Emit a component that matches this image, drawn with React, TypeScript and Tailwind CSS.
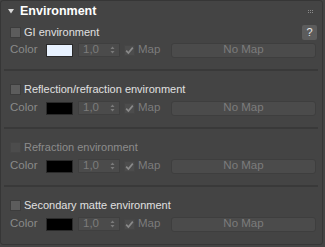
import React from 'react'

const font = { fontFamily: '"Liberation Sans", Arial, sans-serif' }

function Check({ checked, dim }: { checked?: boolean; dim?: boolean }) {
    return (
        <div
            className={`flex items-center justify-center w-[11px] h-[11px] border ${
                dim ? 'bg-[#4c4c4c] border-[#464646]' : 'bg-[#5c5c5c] border-[#3c3c3c]'
            }`}
        >
            {checked && (
                <svg width="9" height="9" viewBox="0 0 9 9">
                    <path d="M1.2 4.6 L3.4 7 L7.8 1.6" fill="none" stroke="#8a8a8a" strokeWidth="1.7" />
                </svg>
            )}
        </div>
    )
}

function ControlRow({ swatch }: { swatch: string }) {
    return (
        <div className="flex items-center h-[14px] pl-[9px] pr-[6px] text-[11.5px]">
            <div className="w-[36px] text-[#8a8a8a] leading-none">Color</div>
            <div className={`w-[27px] h-[13px] border border-[#2a2a2a] ${swatch}`} />
            <div className="flex items-center justify-between ml-[5px] w-[42px] h-[14px] pl-[4px] pr-[4px] bg-[#4b4b4b] border border-[#3f3f3f] text-[#7c7c7c]">
                <span className="leading-none">1,0</span>
                <svg width="5" height="8" viewBox="0 0 5 8">
                    <path d="M0.5 3 L2.5 0.5 L4.5 3 Z M0.5 5 L2.5 7.5 L4.5 5 Z" fill="#7a7a7a" />
                </svg>
            </div>
            <div className="ml-[4px]">
                <Check checked dim />
            </div>
            <div className="ml-[3px] text-[#7c7c7c] leading-none">Map</div>
            <div className="ml-auto flex items-center justify-center w-[145px] h-[15px] rounded-[3px] bg-[#4b4b4b] border border-[#3e3e3e] text-[#7c7c7c] leading-none">
                No Map
            </div>
        </div>
    )
}

function Section({ label, swatch, disabled }: { label: string; swatch: string; disabled?: boolean }) {
    return (
        <div>
            <div className="h-[2px] ml-[3px] mr-[4px] bg-[#393939]" />
            <div className="flex items-center h-[16px] mt-[10px] pl-[9px]">
                <Check dim={disabled} />
                <span className={`ml-[3px] text-[11px] leading-none ${disabled ? 'text-[#8c8c8c]' : 'text-[#e0e0e0]'}`}>
                    {label}
                </span>
            </div>
            <div className="mt-[4px] mb-[12px]">
                <ControlRow swatch={swatch} />
            </div>
        </div>
    )
}

export default function App() {
    return (
        <div className="w-[325px] h-[247px] bg-[#444444] overflow-hidden" style={font}>
            <div className="w-[323px] h-[245px] rounded-[3px] border border-[#363636] bg-[#444444]">
                <div className="flex items-center h-[20px] pl-[7px] pr-[9px]">
                    <svg width="6" height="5" viewBox="0 0 6 5">
                        <path d="M0 0 L6 0 L3 4.5 Z" fill="#d8d8d8" />
                    </svg>
                    <span className="ml-[6px] text-[12.5px] font-bold text-white leading-none">Environment</span>
                    <div className="ml-auto grid grid-cols-3 gap-[1px]">
                        {[0, 1, 2, 3, 4, 5].map((i) => (
                            <div key={i} className="w-[1px] h-[1px] bg-[#8a8a8a]" />
                        ))}
                    </div>
                </div>
                <div className="flex items-center h-[16px] mt-[3px] pl-[9px] pr-[5px]">
                    <Check />
                    <span className="ml-[3px] text-[11px] leading-none text-[#e0e0e0]">GI environment</span>
                    <div className="ml-auto flex items-center justify-center w-[15px] h-[15px] rounded-[2px] bg-[#5c5c5c] text-[11px] text-[#e8e8e8] leading-none">
                        ?
                    </div>
                </div>
                <div className="mt-[3px] mb-[12px]">
                    <ControlRow swatch="bg-[#e8f2ff]" />
                </div>
                <Section label="Reflection/refraction environment" swatch="bg-black" />
                <Section label="Refraction environment" swatch="bg-black" disabled />
                <Section label="Secondary matte environment" swatch="bg-black" />
            </div>
        </div>
    )
}
